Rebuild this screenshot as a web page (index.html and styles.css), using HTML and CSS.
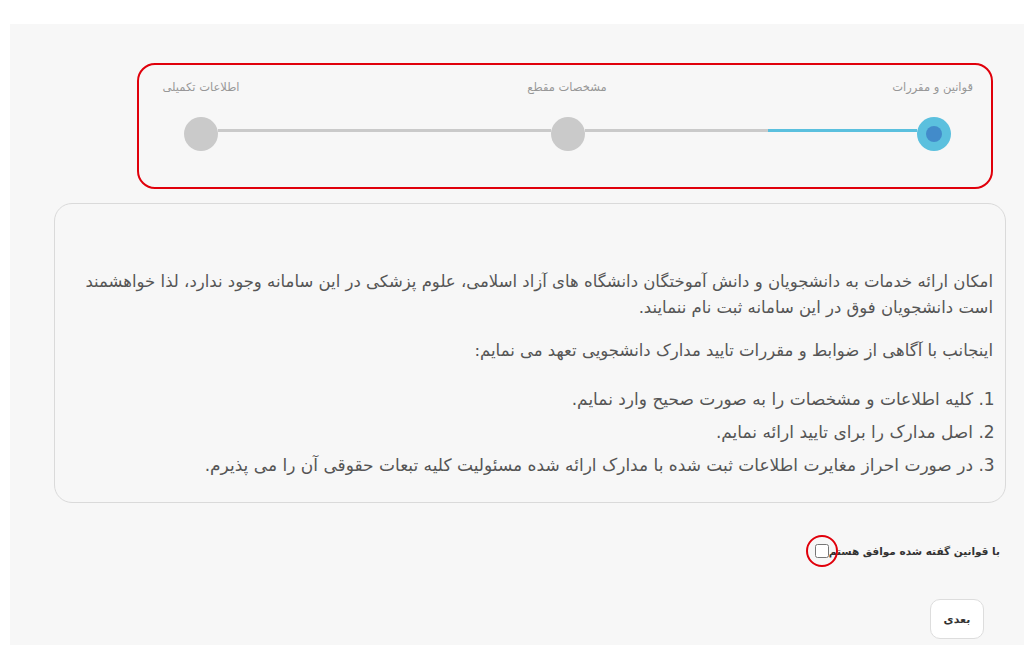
FILE: index.html
```html
<!DOCTYPE html>
<html lang="fa" dir="rtl">
<head>
<meta charset="utf-8">
<title>قوانین و مقررات</title>
<link rel="stylesheet" href="styles.css">
</head>
<body>
<div class="panel">
  <div class="stepper">
    <div class="labels">
      <span class="label">قوانین و مقررات</span>
      <span class="label">مشخصات مقطع</span>
      <span class="label">اطلاعات تکمیلی</span>
    </div>
    <div class="track">
      <span class="dot active"><span class="core"></span></span>
      <span class="bar half"></span>
      <span class="dot"></span>
      <span class="bar"></span>
      <span class="dot"></span>
    </div>
  </div>

  <div class="card">
    <p class="para">امکان ارائه خدمات به دانشجویان و دانش آموختگان دانشگاه های آزاد اسلامی، علوم پزشکی در این سامانه وجود ندارد، لذا خواهشمند است دانشجویان فوق در این سامانه ثبت نام ننمایند.</p>
    <p class="para">اینجانب با آگاهی از ضوابط و مقررات تایید مدارک دانشجویی تعهد می نمایم:</p>
    <ol class="rules">
      <li>کلیه اطلاعات و مشخصات را به صورت صحیح وارد نمایم.</li>
      <li>اصل مدارک را برای تایید ارائه نمایم.</li>
      <li>در صورت احراز مغایرت اطلاعات ثبت شده با مدارک ارائه شده مسئولیت کلیه تبعات حقوقی آن را می پذیرم.</li>
    </ol>
  </div>

  <label class="agree">
    <span class="agree-text">با قوانین گفته شده موافق هستم</span>
    <span class="ring"><input type="checkbox" class="check"></span>
  </label>

  <div class="actions">
    <button type="button" class="next">بعدی</button>
  </div>
</div>
</body>
</html>
```

FILE: styles.css
```css
html, body {
  margin: 0;
  padding: 0;
  background: #ffffff;
  font-family: "DejaVu Sans", "Noto Sans", sans-serif;
}

.panel {
  margin: 24px 0 0 10px;
  background: #f7f7f7;
  min-height: 621px;
  overflow: hidden;
  display: flex;
  flex-direction: column;
}

.stepper {
  margin: 39px 31px 0 127px;
  border: 2px solid #e0000b;
  border-radius: 18px;
  padding: 14px 0 36px;
}

.labels {
  display: flex;
  justify-content: space-between;
  padding: 0 18px 0 22px;
}

.label {
  width: 80px;
  text-align: center;
  font-size: 11.5px;
  color: #979797;
  line-height: 16px;
  white-space: nowrap;
}

.track {
  display: flex;
  align-items: flex-start;
  margin-top: 22px;
  padding: 0 40px 0 45px;
}

.dot {
  width: 34px;
  height: 34px;
  border-radius: 50%;
  background: #cacaca;
  flex: none;
  display: flex;
  align-items: center;
  justify-content: center;
}

.dot.active {
  background: #5bc0de;
}

.core {
  width: 16px;
  height: 16px;
  border-radius: 50%;
  background: #428bca;
}

.bar {
  flex: 1;
  height: 3px;
  margin-top: 12px;
  background: #cacaca;
}

.bar.half {
  background: linear-gradient(to left, #5bc0de 45%, #cacaca 45%);
}

.card {
  margin: 14px 18px 0 44px;
  border: 1px solid #dadada;
  border-radius: 18px;
  padding: 65px 12px 20px;
  color: #555555;
  font-size: 16.5px;
  line-height: 26px;
}

.para {
  margin: 0 0 17px;
}

.rules {
  margin: 19px 0 0;
  padding: 0 20px 0 0;
}

.rules li {
  line-height: 33px;
  font-size: 17px;
}

.agree {
  display: flex;
  align-items: center;
  align-self: flex-start;
  margin: 32px 24px 0 0;
}

.agree-text {
  font-size: 10.5px;
  font-weight: bold;
  color: #333333;
}

.ring {
  width: 28px;
  height: 28px;
  border: 2px solid #e0000b;
  border-radius: 50%;
  display: flex;
  align-items: center;
  justify-content: center;
  margin-right: -9px;
  position: relative;
}

.check {
  margin: 0;
  width: 14px;
  height: 14px;
}

.actions {
  display: flex;
  margin: 32px 40px 0 0;
}

.next {
  width: 54px;
  height: 40px;
  background: #ffffff;
  border: 1px solid #dddddd;
  border-radius: 10px;
  font-family: "DejaVu Sans", sans-serif;
  font-size: 11px;
  font-weight: bold;
  color: #333333;
  cursor: pointer;
}
```
